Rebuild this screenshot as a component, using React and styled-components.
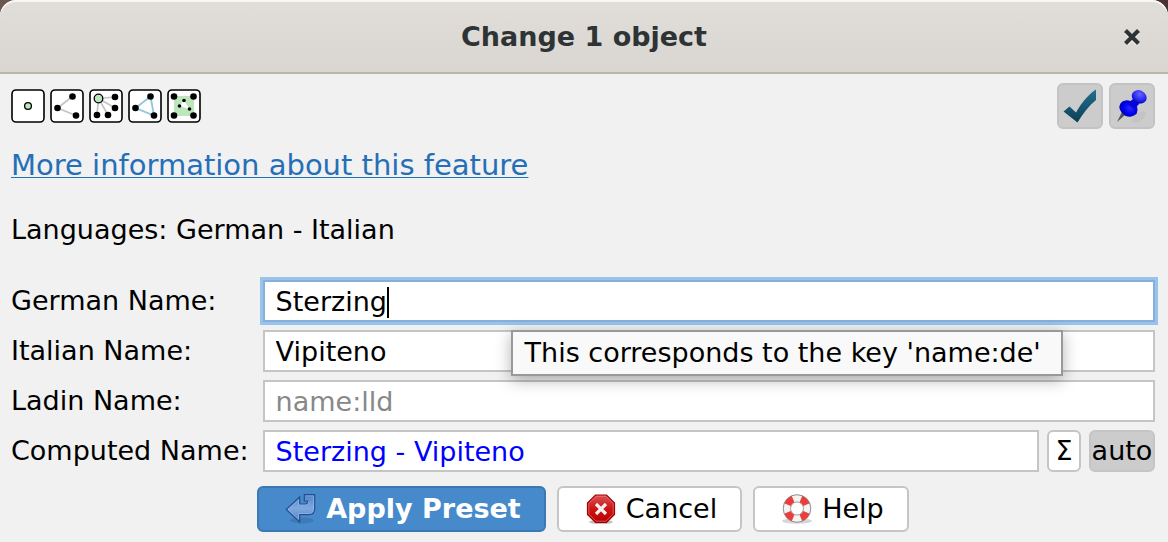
import React, { useState } from "react";
import styled, { createGlobalStyle, css } from "styled-components";

const GlobalStyle = createGlobalStyle`
  *, *::before, *::after { box-sizing: border-box; }
  body {
    margin: 0;
    background: #f1f1f1;
    color: #000;
    font: 27px/32px "DejaVu Sans", sans-serif;
  }
  button, input { font: inherit; color: inherit; margin: 0; }
`;

const Backdrop = styled.div`
  background: linear-gradient(90deg, #6b5650, #4a3230) top / 100% 32px no-repeat;
`;

const TitleBar = styled.header`
  display: grid;
  grid-template-columns: 48px 1fr 48px;
  align-items: center;
  height: 74px;
  padding: 2px 12px 0;
  border-bottom: 2px solid #bbb6ac;
  border-radius: 16px 16px 0 0;
  background: linear-gradient(#e1deda, #d9d6d1);
  box-shadow: inset 0 2px 0 #f8f7f6;
`;

const Title = styled.h1`
  grid-column: 2;
  margin: 0;
  font-size: 27px;
  line-height: 32px;
  text-align: center;
  color: #2e3436;
`;

const CloseButton = styled.button`
  display: grid;
  place-items: center;
  height: 48px;
  padding: 0;
  border: 0;
  background: none;
`;

const Content = styled.main`
  padding: 9px 13px 10px 11px;
  background: #f1f1f1;
`;

const Toolbar = styled.div`
  display: flex;
  align-items: center;
  justify-content: space-between;
`;

const IconGroup = styled.div`
  display: flex;
  gap: ${(p) => p.$gap}px;
`;

const ToggleButton = styled.button`
  display: grid;
  place-items: center;
  width: 46px;
  height: 46px;
  padding: 0;
  border: 2px solid #c3c3c3;
  border-radius: 6px;
  background: #cccccc;
`;

const MoreLink = styled.a`
  display: block;
  width: fit-content;
  margin-top: 20px;
  font-size: 29px;
  color: #256fb8;
  text-decoration-thickness: 1px;
  text-underline-offset: 2px;
`;

const Languages = styled.p`
  margin: 33px 0 34px;
`;

const Form = styled.form`
  display: grid;
  grid-template-columns: auto 1fr;
  gap: 8px 14px;
`;

const Label = styled.label`
  line-height: 42px;
  white-space: nowrap;
`;

const Field = styled.div`
  position: relative;
  display: flex;
  gap: 8px;
  min-width: 0;
`;

const TextInput = styled.input`
  flex: 1;
  min-width: 0;
  height: 42px;
  padding: 0 11px;
  border: 2px solid #c5c5c5;
  border-radius: 0;
  outline: none;
  background: #fff;
  color: ${(p) => p.$color || "#000"};
  &::placeholder { color: #888; opacity: 1; }
  ${(p) =>
    p.$active &&
    css`
      border-color: #87afda;
      box-shadow: 0 0 0 3px #97c3ec;
    `}
`;

const Caret = styled.span`
  position: absolute;
  top: 7px;
  left: 124px;
  width: 2px;
  height: 31px;
  background: #000;
`;

const Tooltip = styled.div`
  position: absolute;
  z-index: 1;
  top: 0;
  left: 248px;
  padding: 5px 20px 5px 12px;
  border: 2px solid #999;
  background: #f9f9f9;
  box-shadow: 0 4px 16px rgba(0, 0, 0, 0.3);
  white-space: nowrap;
`;

const SmallButton = styled.button`
  height: 42px;
  padding: 0;
  width: ${(p) => p.$width}px;
  border: 2px solid #c5c5c5;
  border-radius: 6px;
  background: ${(p) => (p.$pressed ? "#cccccc" : "#fff")};
  line-height: 36px;
  white-space: nowrap;
`;

const Actions = styled.footer`
  display: flex;
  justify-content: center;
  gap: 11px;
  margin-top: 14px;
`;

const ActionButton = styled.button`
  display: flex;
  align-items: center;
  gap: 9px;
  height: 46px;
  padding: 0 23px 0 26px;
  border: 2px solid ${(p) => (p.$primary ? "#3c78b4" : "#c5c5c5")};
  border-radius: 6px;
  background: ${(p) => (p.$primary ? "#478acb" : "#fff")};
  color: ${(p) => (p.$primary ? "#fff" : "#000")};
  font-weight: ${(p) => (p.$primary ? 700 : 400)};
`;

function TypeIcon({ label, children }) {
  return (
    <svg width="34" height="34" viewBox="0 0 34 34" role="img" aria-label={label}>
      <rect x="1" y="1" width="32" height="32" rx="4" fill="#fff" stroke="#000" strokeWidth="1.6" />
      {children}
    </svg>
  );
}

function Dots({ points, r = 3.3 }) {
  return points.map(([x, y]) => <circle key={`${x}-${y}`} cx={x} cy={y} r={r} />);
}

const corners = [[7, 7.5], [26.5, 7.5], [7, 26.5], [26.5, 26.5]];

function TypeIcons() {
  return (
    <IconGroup $gap={5}>
      <TypeIcon label="Node">
        <circle cx="17" cy="17" r="3.4" fill="#bde6bd" stroke="#000" strokeWidth="1.3" />
      </TypeIcon>
      <TypeIcon label="Way">
        <path d="M22.5 7.5 7.5 19 26 26.5" fill="none" stroke="#c4c4c4" strokeWidth="1.7" />
        <Dots points={[[22.5, 7.5], [7.5, 19], [26, 26.5]]} />
      </TypeIcon>
      <TypeIcon label="Relation">
        <path d="M9.5 9.5 26 8M9.5 9.5 26 19M9.5 9.5 19 26M9.5 9.5 8 26" stroke="#c4c4c4" strokeWidth="1.7" />
        <Dots points={[[26, 8], [26, 19], [19, 26], [8, 26]]} />
        <circle cx="9.5" cy="9.5" r="4.3" fill="#bde6bd" stroke="#000" strokeWidth="1.3" />
      </TypeIcon>
      <TypeIcon label="Closed way">
        <path d="M22.5 7.5 7.5 19 26 26.5Z" fill="none" stroke="#8cc8dc" strokeWidth="1.8" />
        <Dots points={[[22.5, 7.5], [7.5, 19], [26, 26.5]]} />
      </TypeIcon>
      <TypeIcon label="Multipolygon">
        <path d="M7 7h20v20H7Z" fill="#bde6bd" />
        <path d="m17 11.500-4.500 5.500 10 3Z" fill="#fff" />
        <Dots points={corners} />
        <Dots points={[[17, 11.5], [12.5, 17], [22.5, 20]]} r={1.8} />
      </TypeIcon>
    </IconGroup>
  );
}

const CloseIcon = () => (
  <svg width="18" height="18" viewBox="0 0 18 18" aria-hidden="true">
    <path d="m3 4 12 12M15 4 3 16" stroke="#fff" strokeWidth="4.500" />
    <path d="m2.500 2.500 13 13M15.500 2.500l-13 13" stroke="#2e3436" strokeWidth="4.200" />
  </svg>
);

const CheckIcon = () => (
  <svg width="36" height="36" viewBox="0 0 36 36" aria-hidden="true">
    <defs>
      <linearGradient id="check" x1="0" y1="0" x2="0" y2="1">
        <stop offset="0" stopColor="#246f91" />
        <stop offset="1" stopColor="#0b3f55" />
      </linearGradient>
    </defs>
    <path d="m1.500 23.500 6-5 6.500 6C20 14 27 6 34 1.500V12C26.500 18 21 25.500 15.500 34.500Z" fill="url(#check)" />
  </svg>
);

const PinIcon = () => (
  <svg width="36" height="36" viewBox="0 0 36 36" aria-hidden="true">
    <defs>
      <radialGradient id="pinTop" cx="0.450" cy="0.300" r="0.700">
        <stop offset="0" stopColor="#6666ff" />
        <stop offset="0.700" stopColor="#2222f0" />
        <stop offset="1" stopColor="#0000c0" />
      </radialGradient>
      <radialGradient id="pinBase" cx="0.550" cy="0.450" r="0.600">
        <stop offset="0" stopColor="#2828ff" />
        <stop offset="0.600" stopColor="#0000ee" />
        <stop offset="1" stopColor="#0000a8" />
      </radialGradient>
    </defs>
    <ellipse cx="25" cy="29" rx="8" ry="4" fill="#bcbcbc" opacity="0.500" transform="rotate(-35 25 29)" />
    <path d="m8 24-5 10 8-7Z" fill="#555" />
    <ellipse cx="14.500" cy="20.500" rx="9.500" ry="7.700" fill="url(#pinBase)" transform="rotate(30 14.500 20.500)" />
    <path d="m19 11 6.500 4.500-5 5.500-7-5.500Z" fill="#0606d8" />
    <ellipse cx="25.200" cy="8.800" rx="7.700" ry="6.400" fill="url(#pinTop)" transform="rotate(30 25.200 8.800)" />
  </svg>
);

const ApplyIcon = () => (
  <svg width="32" height="32" viewBox="0 0 32 32" aria-hidden="true">
    <defs>
      <linearGradient id="arrow" x1="0" y1="0" x2="0" y2="1">
        <stop offset="0" stopColor="#4d84c8" />
        <stop offset="0.500" stopColor="#7fa9de" />
        <stop offset="1" stopColor="#4b80c8" />
      </linearGradient>
    </defs>
    <ellipse cx="17" cy="27.500" rx="12" ry="3" fill="#2c5e96" opacity="0.350" />
    <path
      d="M19.300 1.700H29.700V15.500q0 6.200-6.200 6.200H14.700V29L1.300 16.500 14.700 4v7h5.500q2.500 0 2.500-2.500V8h-3.400Z"
      fill="url(#arrow)" stroke="#24508f" strokeWidth="1.200"
    />
    <path d="M20.500 2.900h8V15.500q0 5-5 5h-10v5.800L3 16.500l10.500-9.800v5.500h7q3.400 0 3.400-4" fill="none" stroke="#a8c7ee" strokeWidth="0.800" opacity="0.600" />
  </svg>
);

const CancelIcon = () => (
  <svg width="32" height="32" viewBox="0 0 32 32" aria-hidden="true">
    <defs>
      <linearGradient id="stop" x1="0" y1="0" x2="0" y2="1">
        <stop offset="0" stopColor="#dc5454" />
        <stop offset="0.500" stopColor="#cc1414" />
        <stop offset="1" stopColor="#b80000" />
      </linearGradient>
    </defs>
    <ellipse cx="16" cy="29" rx="12" ry="2" fill="#000" opacity="0.250" />
    <path d="M10.500 2h11L29.500 10v11.500L21.500 29.500h-11L2.500 21.500V10Z" fill="url(#stop)" stroke="#a00000" strokeWidth="1.200" />
    <path d="M11 3.300h10L28.200 10.500V21L21 28.200H11L3.800 21V10.500Z" fill="none" stroke="#f08080" strokeWidth="0.800" opacity="0.800" />
    <path d="m11 11 10 10M21 11 11 21" stroke="#f4f0f0" strokeWidth="3.200" />
  </svg>
);

const HelpIcon = () => (
  <svg width="32" height="32" viewBox="0 0 32 32" aria-hidden="true">
    <ellipse cx="16" cy="28" rx="15" ry="2.800" fill="#000" opacity="0.160" />
    <circle cx="16" cy="15.500" r="10.300" fill="none" stroke="#f4f4f2" strokeWidth="7.500" />
    <circle
      cx="16" cy="15.500" r="10.300" fill="none" stroke="#ec3c3c" strokeWidth="7.200"
      pathLength="8" strokeDasharray="1 1" strokeDashoffset="-0.500"
    />
    <circle cx="16" cy="15.500" r="13.800" fill="none" stroke="#8a7f7c" strokeWidth="0.900" />
    <circle cx="16" cy="15.500" r="6.500" fill="none" stroke="#9a908c" strokeWidth="0.900" />
  </svg>
);

export default function App() {
  const [german, setGerman] = useState("Sterzing");
  const [italian, setItalian] = useState("Vipiteno");
  const [ladin, setLadin] = useState("");

  return (
    <Backdrop>
      <GlobalStyle />
      <TitleBar>
        <Title>Change 1 object</Title>
        <CloseButton type="button" aria-label="Close"><CloseIcon /></CloseButton>
      </TitleBar>
      <Content>
        <Toolbar>
          <TypeIcons />
          <IconGroup $gap={6}>
            <ToggleButton type="button" aria-label="Validate" aria-pressed="true"><CheckIcon /></ToggleButton>
            <ToggleButton type="button" aria-label="Pin" aria-pressed="true"><PinIcon /></ToggleButton>
          </IconGroup>
        </Toolbar>
        <MoreLink href="#feature">More information about this feature</MoreLink>
        <Languages>Languages: German - Italian</Languages>
        <Form id="preset" onSubmit={(e) => e.preventDefault()}>
          <Label htmlFor="name-de">German Name:</Label>
          <Field>
            <TextInput id="name-de" $active aria-describedby="tip" value={german} onChange={(e) => setGerman(e.target.value)} />
            <Caret />
          </Field>
          <Label htmlFor="name-it">Italian Name:</Label>
          <Field>
            <TextInput id="name-it" value={italian} onChange={(e) => setItalian(e.target.value)} />
            <Tooltip id="tip" role="tooltip">This corresponds to the key 'name:de'</Tooltip>
          </Field>
          <Label htmlFor="name-lld">Ladin Name:</Label>
          <Field>
            <TextInput id="name-lld" placeholder="name:lld" value={ladin} onChange={(e) => setLadin(e.target.value)} />
          </Field>
          <Label htmlFor="name">Computed Name:</Label>
          <Field>
            <TextInput id="name" $color="#0000ff" readOnly value={[german, italian, ladin].filter(Boolean).join(" - ")} />
            <SmallButton type="button" $width={34}>Σ</SmallButton>
            <SmallButton type="button" $width={66} $pressed aria-pressed="true">auto</SmallButton>
          </Field>
        </Form>
        <Actions>
          <ActionButton type="submit" form="preset" $primary><ApplyIcon />Apply Preset</ActionButton>
          <ActionButton type="button"><CancelIcon />Cancel</ActionButton>
          <ActionButton type="button"><HelpIcon />Help</ActionButton>
        </Actions>
      </Content>
    </Backdrop>
  );
}
